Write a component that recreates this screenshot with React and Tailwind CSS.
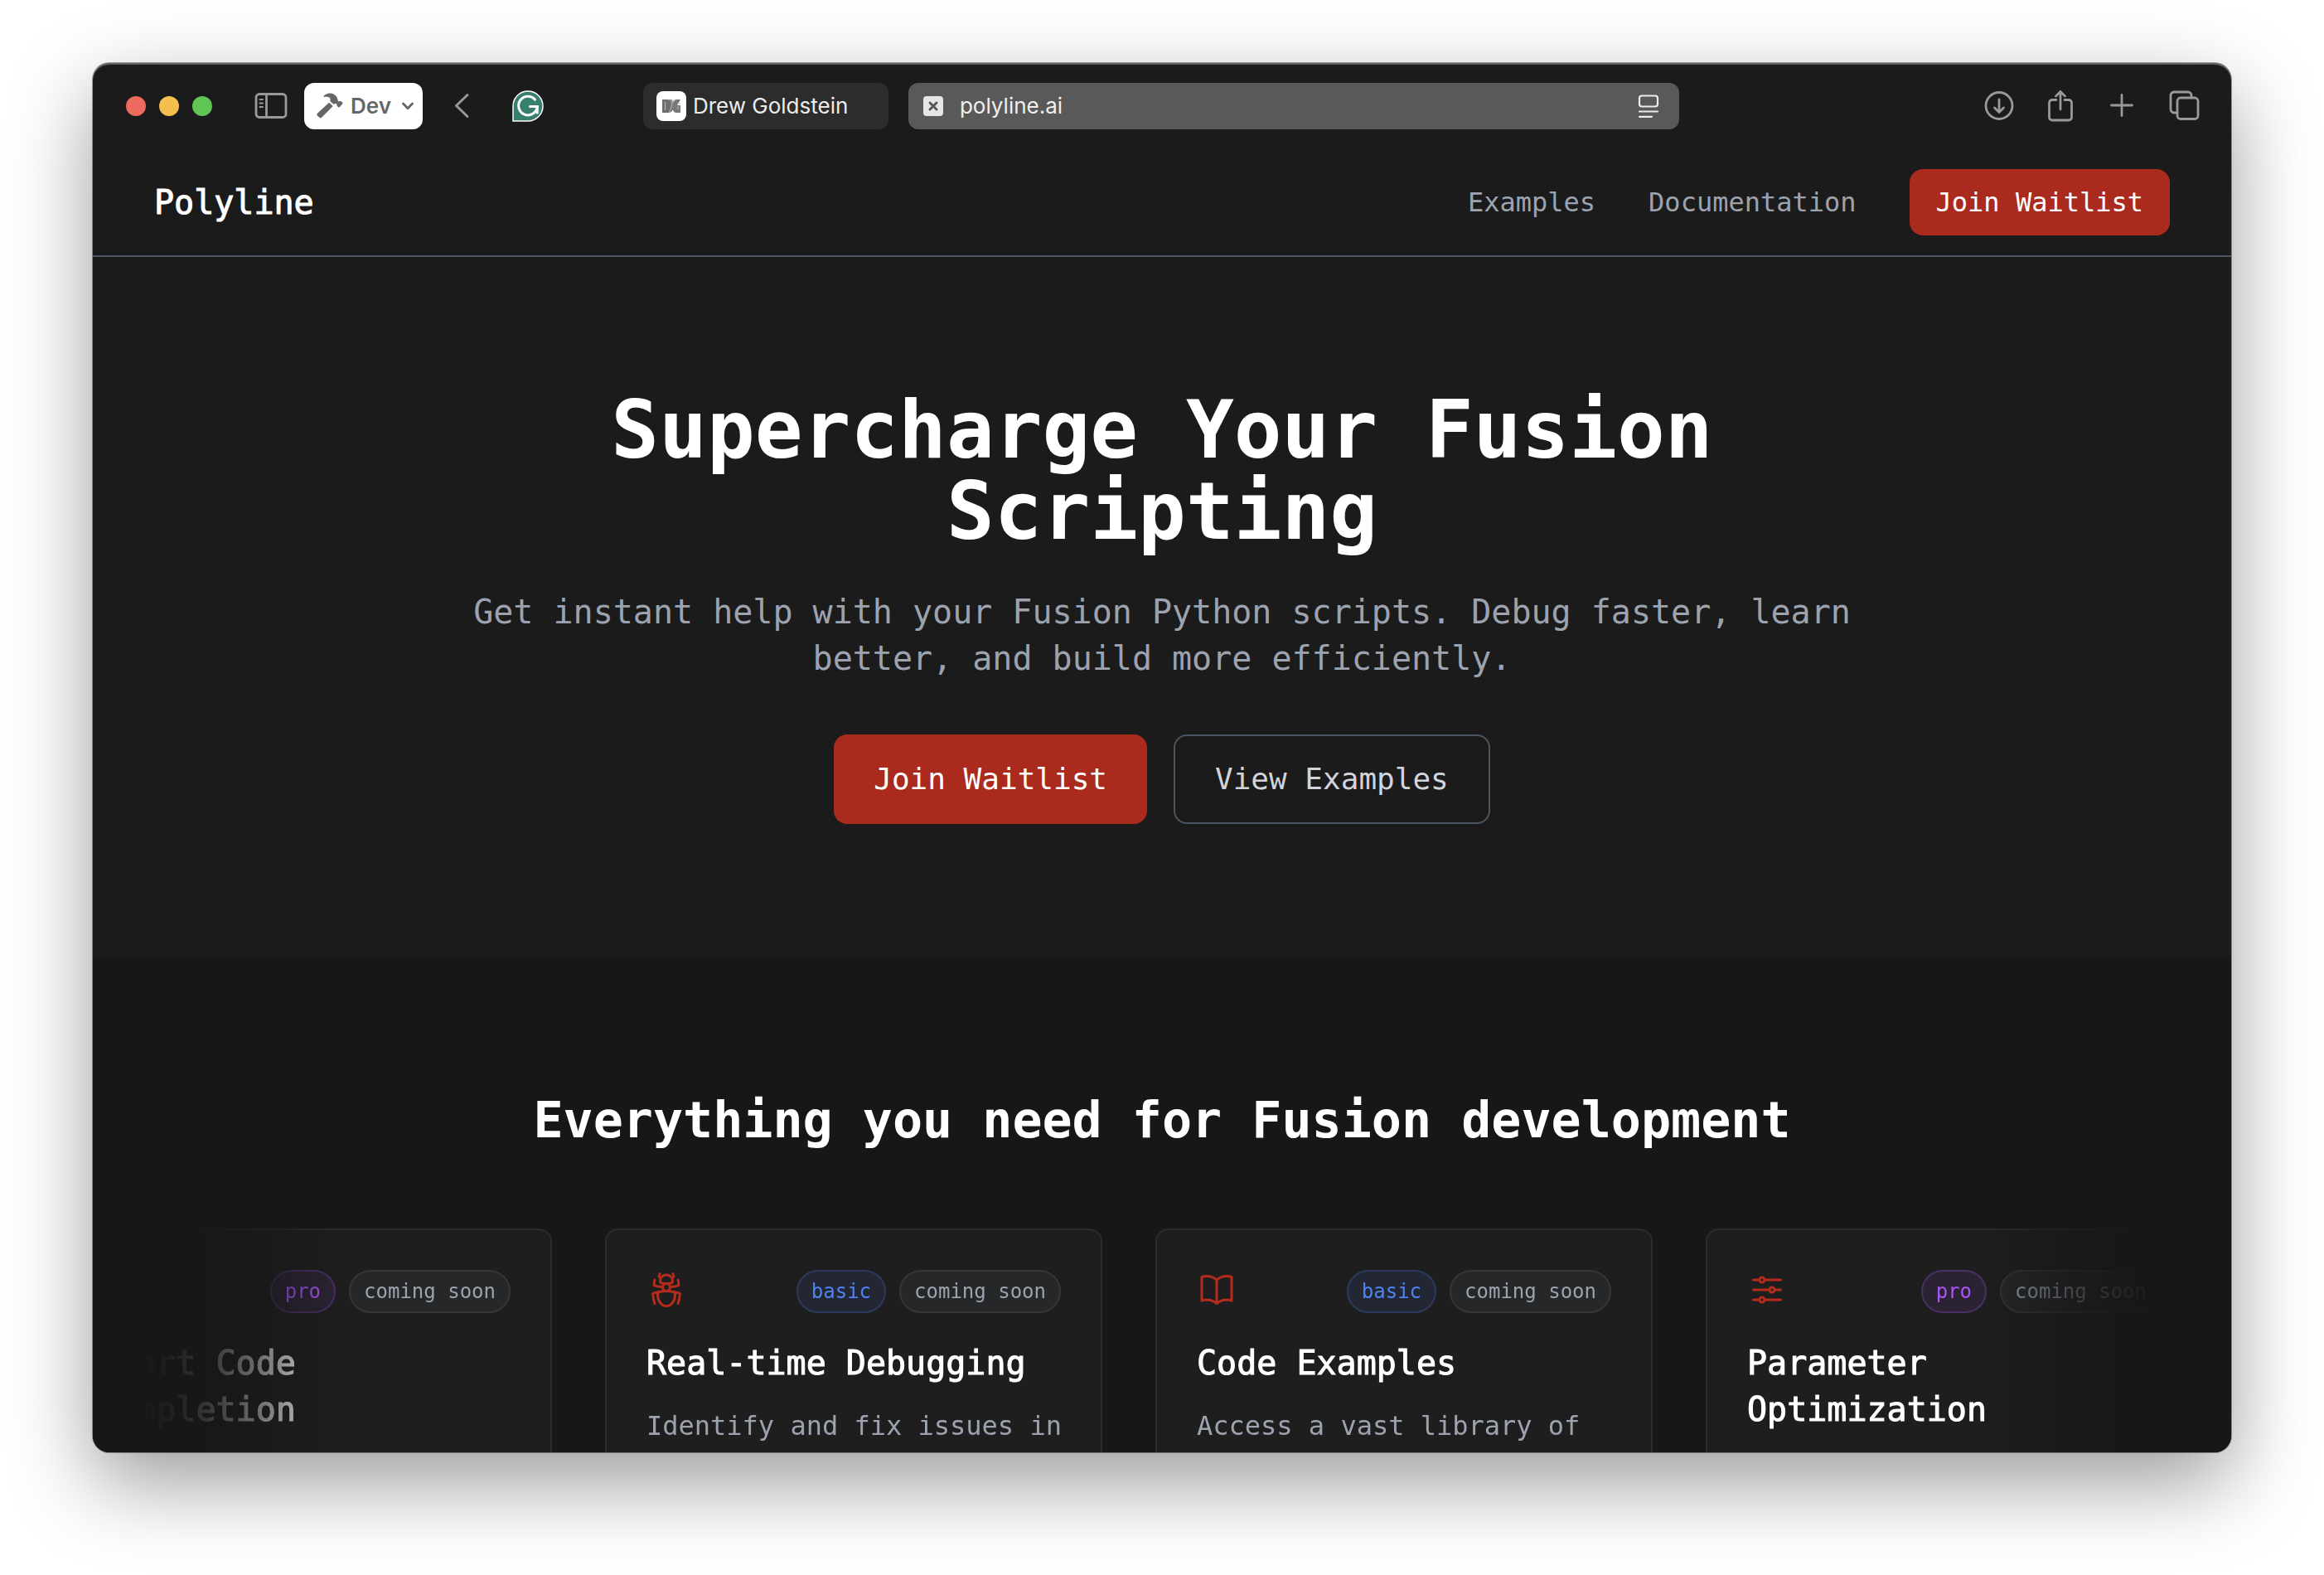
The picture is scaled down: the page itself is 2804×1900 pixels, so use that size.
import React from "react";
import { HiOutlineBugAnt, HiOutlineBookOpen, HiOutlineAdjustmentsHorizontal, HiOutlineCodeBracket } from "react-icons/hi2";

function ToolbarIcon({ label, className, viewBox, children }) {
  return (
    <button type="button" aria-label={label} className="block shrink-0 text-[#999999]">
      <svg
        className={className}
        viewBox={viewBox}
        fill="none"
        stroke="currentColor"
        strokeWidth="2.8"
        strokeLinecap="round"
        strokeLinejoin="round"
      >
        {children}
      </svg>
    </button>
  );
}

function Toolbar() {
  return (
    <div className="flex h-[104px] shrink-0 items-center pr-[38px] pl-10 font-['Inter',sans-serif] text-[26px] leading-8">
      <div className="flex shrink-0 gap-4">
        <button type="button" aria-label="Close" className="size-6 rounded-full bg-[#ec6a5e]" />
        <button type="button" aria-label="Minimize" className="size-6 rounded-full bg-[#f4bf4f]" />
        <button type="button" aria-label="Zoom" className="size-6 rounded-full bg-[#61c554]" />
      </div>

      <div className="ml-[51px] flex shrink-0 items-center">
        <ToolbarIcon label="Sidebar" className="h-8 w-10" viewBox="0 0 40 32">
          <rect x="2" y="1.500" width="36" height="28" rx="4" />
          <path d="M14.500 1.500v28" />
          <path d="M6.500 8h3.500M6.500 12.500h3.500M6.500 17h3.500" strokeWidth="2" />
        </ToolbarIcon>

        <button
          type="button"
          className="ml-5 flex h-14 items-center rounded-xl bg-white pr-[10px] pl-[14px] font-semibold text-[#666666]"
        >
          <svg className="h-8 w-9" viewBox="0 0 36 32" fill="currentColor">
            <path d="M9.500 4.200C12 .8 17.500-.6 21.800 1.800c3 1.700 4.700 4.600 4.900 8l1.600.7c.8-.6 1.900-.6 2.600 0l1.200 1.100c.5.500.5 1.100.1 1.600l-3.400 4c-.5.500-1.100.5-1.600.1l-1.300-1.200c-.6-.6-.7-1.500-.3-2.300l-1.300-1-2.900.9-4.100-3.800c.9-3-.6-5-4-5.100-1.300 0-2.400.1-3.300.3-.6.100-.9-.4-.5-.9z" />
            <path d="M16 11.700l4.700 4.300L7.400 29.500c-1 1-2.300 1-3.300.1l-2-1.900c-1-.9-.9-2.300.1-3.200z" />
          </svg>
          <span className="ml-1.5">Dev</span>
          <svg className="ml-3 h-3 w-4" viewBox="0 0 16 12" fill="none" stroke="currentColor" strokeWidth="2.800" strokeLinecap="round" strokeLinejoin="round">
            <path d="M2.500 3L8 8.800 13.500 3" />
          </svg>
        </button>

        <div className="ml-[37px]">
          <ToolbarIcon label="Back" className="h-8 w-5" viewBox="0 0 20 32">
            <path d="M17 2.500L3.500 15.500 17 28.500" strokeWidth="3" />
          </ToolbarIcon>
        </div>

        <button type="button" aria-label="Grammarly" className="ml-[51px] block">
          <svg className="size-[38px]" viewBox="0 0 38 38" fill="none">
            <path d="M19 1a18 18 0 1 1 0 36H1V19A18 18 0 0 1 19 1z" fill="#37806f" stroke="#ffffff" strokeWidth="1.500" />
            <path d="M27.600 11.200A11.300 11.300 0 1 0 30.200 20" stroke="#ffffff" strokeWidth="3" strokeLinecap="round" />
            <path d="M21.500 19.500h8.700v7.500" stroke="#ffffff" strokeWidth="3" strokeLinecap="round" />
          </svg>
        </button>
      </div>

      <div className="ml-[120px] flex min-w-0 flex-1 gap-6 text-[#ececec]">
        <button type="button" className="flex h-14 w-[296px] shrink-0 items-center gap-2 rounded-xl bg-[#2c2c2c] pl-4">
          <span className="flex size-9 items-center justify-center rounded-lg bg-white">
            <svg className="h-4 w-[22px]" viewBox="0 0 22 16">
              <path d="M0 0h6c6 0 7 6 8 10-1 3-3 5-5 6H0z" fill="#6f6f6f" />
              <path d="M8 0h3c3 1 4 10 8 16h-3C11 15 12 3 8 0z" fill="#8c8c8c" />
              <path d="M22 0h-5c-6 1-7 15 1 16h4V7h-4" fill="#787878" />
              <path d="M3.500 3v10M14 0c-3 3-2 10-6 16M18 5h4M19 8v4" stroke="#bdbdbd" strokeWidth="1" fill="none" />
            </svg>
          </span>
          <span>Drew Goldstein</span>
        </button>
        <div className="flex h-14 min-w-0 flex-1 items-center rounded-xl bg-[#595959] pr-6 pl-[18px]">
          <button type="button" aria-label="Close tab" className="shrink-0">
            <svg className="size-6" viewBox="0 0 24 24">
              <rect width="24" height="24" rx="4" fill="#e6e6e6" />
              <path d="M8 8l8 8M16 8l-8 8" stroke="#595959" strokeWidth="3" strokeLinecap="round" />
            </svg>
          </button>
          <input
            aria-label="Address"
            defaultValue="polyline.ai"
            className="ml-5 min-w-0 flex-1 bg-transparent text-[#f0f0f0] outline-none"
          />
          <button type="button" aria-label="Reader view" className="shrink-0">
            <svg className="h-7 w-[26px]" viewBox="0 0 26 28" fill="none" stroke="#ececec" strokeWidth="2.200" strokeLinecap="round">
              <rect x="2" y="1.500" width="22" height="13" rx="3" />
              <path d="M2 20.500h22M2 26.800h15" />
            </svg>
          </button>
        </div>
      </div>

      <div className="ml-[368px] flex shrink-0 items-center">
        <ToolbarIcon label="Downloads" className="size-9" viewBox="0 0 36 36">
          <circle cx="18" cy="17.500" r="16" />
          <path d="M18 10v15M12.500 20L18 25.500l5.500-5.500" />
        </ToolbarIcon>
        <div className="ml-10">
          <ToolbarIcon label="Share" className="h-10 w-8" viewBox="0 0 32 40">
            <path d="M11 12.500H6A3.500 3.500 0 0 0 2.500 16v17.500A3.500 3.500 0 0 0 6 37h20a3.500 3.500 0 0 0 3.500-3.500V16a3.500 3.500 0 0 0-3.500-3.500h-5" />
            <path d="M16 24V2.500M10.500 8L16 2.500 21.500 8" />
          </ToolbarIcon>
        </div>
        <div className="ml-[42px]">
          <ToolbarIcon label="New tab" className="size-8" viewBox="0 0 32 32">
            <path d="M16 2.500v25M3.500 15h25" />
          </ToolbarIcon>
        </div>
        <div className="ml-10">
          <ToolbarIcon label="Tab overview" className="size-[38px]" viewBox="0 0 38 38">
            <rect x="11" y="9" width="25" height="25.500" rx="4" />
            <path d="M11 27H7a4 4 0 0 1-4-4V6a4 4 0 0 1 4-4h17a4 4 0 0 1 4 4v3" />
          </ToolbarIcon>
        </div>
      </div>
    </div>
  );
}

function SiteNav() {
  return (
    <nav className="border-b-2 border-[#4b5563]">
      <div className="mx-auto flex max-w-[2560px] items-center justify-between px-16 py-6">
        <a href="#" className="text-[40px] leading-[56px] text-white [-webkit-text-stroke:1px_currentColor]">
          Polyline
        </a>
        <div className="flex items-center gap-16 text-[32px] leading-[48px]">
          <a href="#examples" className="text-[#9ca3af]">Examples</a>
          <a href="#docs" className="text-[#9ca3af]">Documentation</a>
          <button type="button" className="rounded-2xl bg-[#aa2b1d] px-8 py-4 text-white">
            Join Waitlist
          </button>
        </div>
      </div>
    </nav>
  );
}

function Hero() {
  return (
    <section className="px-16 py-40 text-center">
      <h1 className="mx-auto max-w-[1792px] text-[96px] leading-[98px] font-bold text-white">
        Supercharge Your Fusion Scripting
      </h1>
      <p className="mx-auto mt-11 max-w-[1792px] text-[40px] leading-[56px] text-[#9ca3af]">
        Get instant help with your Fusion Python scripts. Debug faster, learn better, and build more efficiently.
      </p>
      <div className="mt-16 flex justify-center gap-8 text-[36px] leading-[56px]">
        <button type="button" className="rounded-2xl bg-[#aa2b1d] px-12 py-6 text-white">
          Join Waitlist
        </button>
        <button type="button" className="rounded-2xl border-2 border-[#4b5563] px-12 py-6 text-[#d1d5db]">
          View Examples
        </button>
      </div>
    </section>
  );
}

const tiers = {
  pro: "border-[#a855f7]/25 bg-[#a855f7]/10 text-[#a855f7]",
  basic: "border-[#2b3a5e] bg-[#232733] text-[#4f83f0]",
};

const features = [
  { Icon: HiOutlineCodeBracket, tier: "pro", title: "Smart Code Completion" },
  { Icon: HiOutlineBugAnt, tier: "basic", title: "Real-time Debugging", text: "Identify and fix issues in" },
  { Icon: HiOutlineBookOpen, tier: "basic", title: "Code Examples", text: "Access a vast library of" },
  { Icon: HiOutlineAdjustmentsHorizontal, tier: "pro", title: "Parameter Optimization" },
];

function FeatureCard({ Icon, tier, title, text }) {
  return (
    <article className="w-[600px] shrink-0 rounded-2xl border-2 border-[#2c2c2c] bg-[#1e1e1e] p-12">
      <div className="flex items-start justify-between">
        <Icon className="size-12 text-[#b52c1c]" />
        <div className="flex gap-4 text-[24px] leading-8">
          <span className={"rounded-full border-2 px-4 py-2 " + tiers[tier]}>{tier}</span>
          <span className="rounded-full border-2 border-[#343638] bg-[#252729] px-4 py-2 text-[#9ca3af]">coming soon</span>
        </div>
      </div>
      <h3 className="mt-8 text-[40px] leading-[56px] text-white [-webkit-text-stroke:1px_currentColor]">{title}</h3>
      {text && <p className="mt-6 text-[32px] leading-[48px] whitespace-nowrap text-[#9ca3af]">{text}</p>}
    </article>
  );
}

function Features() {
  return (
    <section className="flex-1 bg-[#171717] pt-40">
      <h2 className="text-center text-[60px] leading-[74px] font-bold text-white">
        Everything you need for Fusion development
      </h2>
      <div className="mx-auto mt-[94px] max-w-[2560px] px-8">
        <div className="relative overflow-hidden [mask-image:linear-gradient(to_right,transparent,black_256px,black_calc(100%-256px),transparent)]">
          <div className="-ml-[88px] flex gap-16">
            {features.map((feature) => (
              <FeatureCard key={feature.title} {...feature} />
            ))}
          </div>
          <div className="absolute inset-y-0 left-0 w-64 bg-gradient-to-r from-[#171717] to-[#171717]/0" />
          <div className="absolute inset-y-0 right-0 w-64 bg-gradient-to-l from-[#171717] to-[#171717]/0" />
        </div>
      </div>
    </section>
  );
}

export default function App() {
  return (
    <div className="flex h-screen flex-col overflow-hidden bg-white px-28 pt-[76px] pb-[148px]">
      <main className="flex min-h-0 flex-1 flex-col overflow-hidden rounded-[20px] bg-[#1b1b1b] font-['DejaVu_Sans_Mono','Liberation_Mono',monospace] shadow-[inset_0_2px_0_0_rgba(255,255,255,0.3),0_0_0_1px_rgba(0,0,0,0.35),0_36px_100px_rgba(0,0,0,0.4)]">
        <Toolbar />
        <SiteNav />
        <Hero />
        <Features />
      </main>
    </div>
  );
}
